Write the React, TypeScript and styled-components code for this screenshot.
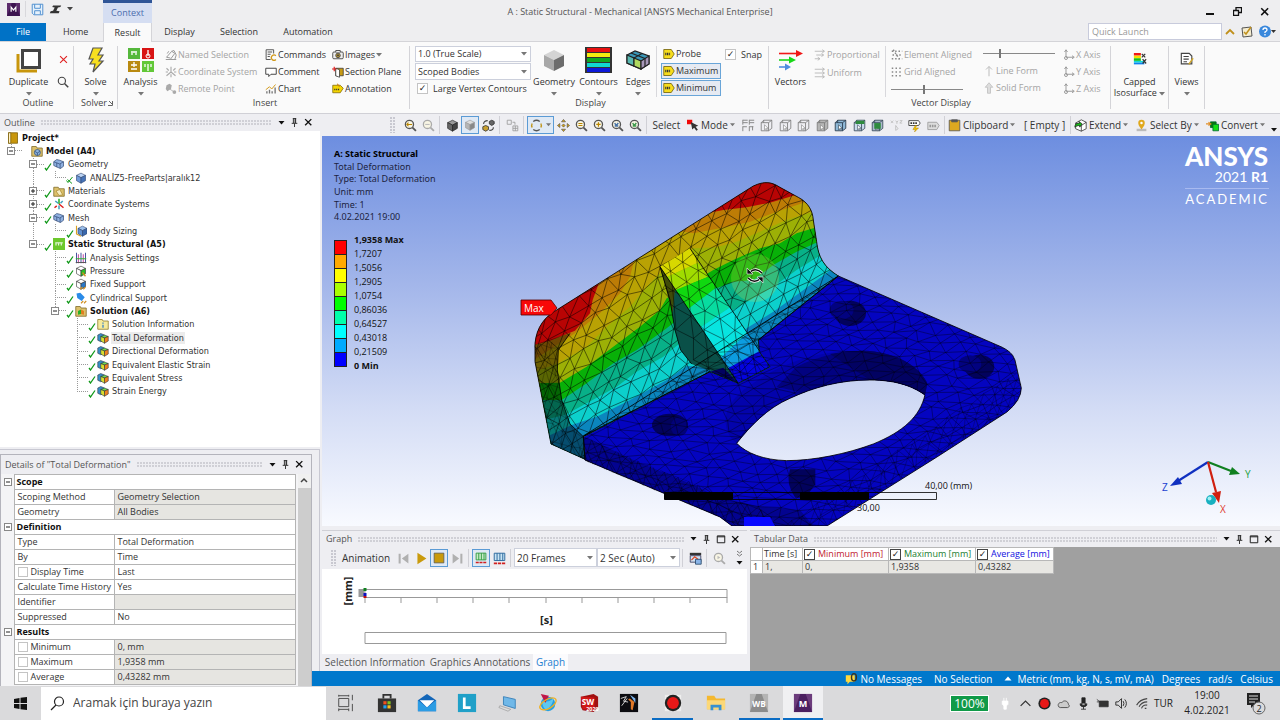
import React from "react";
import styled, { createGlobalStyle, css } from "styled-components";

const GlobalStyle = createGlobalStyle`
  * { box-sizing: border-box; }
  html, body, #root { height: 100%; }
  body {
    margin: 0;
    background: #eeeef2;
    color: #333;
    font: 9px/12px "Open Sans", "Noto Sans", sans-serif;
  }
  button, input, select { font: inherit; color: inherit; margin: 0; }
  ul { list-style: none; margin: 0; padding: 0; }
`;

/* ---------- shared ---------- */

const Row = styled.div<{ $gap?: number; $pr?: number }>`
  display: flex;
  align-items: center;
  gap: ${(p) => p.$gap ?? 0}px;
  padding-right: ${(p) => p.$pr ?? 0}px;
`;

const Column = styled.div<{ $w?: number; $ml?: number; $gap?: number; $pt?: number }>`
  display: flex;
  flex-direction: column;
  flex-shrink: 0;
  gap: ${(p) => p.$gap ?? 0}px;
  width: ${(p) => (p.$w ? `${p.$w}px` : "auto")};
  margin-left: ${(p) => p.$ml ?? 0}px;
  padding-top: ${(p) => p.$pt ?? 0}px;
`;

const PlainButton = styled.button`
  display: inline-flex;
  align-items: center;
  justify-content: center;
  padding: 0;
  border: 0;
  background: none;
  white-space: nowrap;
  svg {
    flex-shrink: 0;
  }
`;

const Spacer = styled.div`
  flex: 1;
`;

const Tick = styled.input.attrs({ type: "checkbox" })<{ $size?: number; $dark?: boolean }>`
  appearance: none;
  flex-shrink: 0;
  width: ${(p) => p.$size ?? 11}px;
  height: ${(p) => p.$size ?? 11}px;
  border: 1px solid ${(p) => (p.$dark ? "#444" : "#c4c4c4")};
  background: #fff;
  display: inline-grid;
  place-content: center;
  &:checked::before {
    content: "✓";
    font: bold 9px/9px "DejaVu Sans", sans-serif;
    color: #222;
  }
`;

const Down = ({ c = "#777", s = 6 }: { c?: string; s?: number }) => (
  <svg width={s} height="4" viewBox="0 0 6 4" aria-hidden="true">
    <path d="M0 0h6L3 3.6z" fill={c} />
  </svg>
);

/* ---------- icons ---------- */

const cubeFaces = (a: string, b: string, c: string, line = "#333") => (
  <g stroke={line} strokeWidth=".8" strokeLinejoin="round">
    <path d="M8 1.5 14 4.5 8 7.5 2 4.5z" fill={a} />
    <path d="M2 4.5 8 7.5V15L2 11.5z" fill={b} />
    <path d="M14 4.5 8 7.5V15l6-3.5z" fill={c} />
  </g>
);

const wireCube = (face: string, line = "#777") => (
  <g fill="none" stroke={line} strokeWidth="1">
    <path d="M1.500 4.500h9v10h-9zM1.500 4.500l3-3h10v10l-4 3M10.500 4.500l4-3M4.500 1.500v3" fill={face} />
    <path d="M5.500 7l4.500 4.500H8l1 2.500-1 .4-1-2.400-1.500 1.300z" fill="#fff" strokeWidth=".7" />
  </g>
);

const glass = (line: string, inner: React.ReactNode) => (
  <g fill="none" stroke={line} strokeWidth="1.600">
    <circle cx="6.700" cy="6.700" r="5" fill="#f8f5e4" />
    <path d="M10.500 10.500l4.200 4.200" strokeWidth="2.200" />
    {inner}
  </g>
);

const glyphs: Record<string, React.ReactNode> = {
  save: (
    <g fill="none" stroke="#4f8fd0" strokeWidth="1.200">
      <path d="M1.500 1.500h13v13h-11l-2-2z" fill="#e6f1fb" />
      <path d="M4.500 1.500v5h7v-5M4.500 14v-4.500h7V14" />
    </g>
  ),
  beam: <path d="M5 3h10l-1 2-3 .6-2 3.900 4 .5-1 2.500H1l1-2.500 3-.5 2-3.900-3-.6z" fill="#333" />,
  cross: <path d="M3 3l10 10M13 3L3 13" stroke="#e02020" strokeWidth="1.600" />,
  search: (
    <g fill="none" stroke="#444" strokeWidth="1.500">
      <circle cx="6.500" cy="6.500" r="4.800" />
      <path d="M10 10l5 5" strokeWidth="2" />
    </g>
  ),
  named: (
    <g fill="none" stroke="#999" strokeWidth="1.300">
      <path d="M1 14h14M2 11l7-8 4 3-6 8M9 3l3-1 3 6-2 6M3 6l2-3" />
      <path d="M2 11l5 1" />
    </g>
  ),
  coord: (
    <g stroke="#aaa" strokeWidth="1.500">
      <path d="M8 8V1M8 8l6 5M8 8l-6 5M2 3l3 3M14 3l-3 3M8 11v4M1 8h3M12 8h3" />
    </g>
  ),
  remote: (
    <g fill="#aaa">
      <path d="M2 3l4-2 3 2-1 5-5 3-2-3z" />
      <circle cx="12.500" cy="12" r="2.500" />
      <path d="M6 8l5 3" stroke="#aaa" />
    </g>
  ),
  commands: (
    <g fill="none" stroke="#555" strokeWidth="1.300">
      <path d="M1.500 1h10v5M1.500 1v13h6M3.500 4h6M3.500 7h4M3.500 10h3" />
      <path d="M14.500 9a3.500 3.500 0 1 0 0 5" stroke="#d29a1c" strokeWidth="1.800" />
    </g>
  ),
  comment: <path d="M1 3h14v8H8l-3 3v-3H1z" fill="#fff" stroke="#444" strokeWidth="1.300" />,
  chart: (
    <g fill="none" strokeWidth="1.800">
      <path d="M2.500 14v-3M6 14V9M9.500 14v-3M13.500 14V6" stroke="#777" />
      <path d="M1 9l5-4 3 3 5-6" stroke="#d29a1c" strokeWidth="1.300" />
    </g>
  ),
  camera: (
    <g stroke="#444" strokeWidth="1.200">
      <rect x="1" y="4" width="14" height="9" rx="1.500" fill="#eee" />
      <path d="M5 4V2h6v2" fill="#eee" />
      <circle cx="8" cy="8.500" r="3" fill="#d0a62a" />
      <circle cx="8" cy="8.500" r="1" fill="#333" />
    </g>
  ),
  section: (
    <g>
      <path d="M5 3h10v10H5z" fill="#c79a14" stroke="#333" />
      <path d="M5 3l5 2v10l-5-2z" fill="#fff" stroke="#333" />
      <path d="M0 4h6M3 1v6" stroke="#e02020" strokeWidth="1.600" />
    </g>
  ),
  annotation: (
    <g>
      <path d="M1 3h10l4 4-4 6H1z" fill="#f4d500" stroke="#7d6400" />
      <path d="M3 8.500h7" stroke="#333" strokeWidth="2" strokeDasharray="1.500 1" />
      <path d="M7 1l3 4" stroke="#d08010" strokeWidth="1.500" />
    </g>
  ),
  probe: (
    <g>
      <path d="M1 2h10l4 6-4 6H1z" fill="#f7dd1c" stroke="#665500" />
      <path d="M3 8h7" stroke="#333" strokeWidth="3.500" strokeDasharray="1.500 .8" />
    </g>
  ),
  prop: (
    <g stroke="#aaa" fill="none">
      <path d="M1 3h12M11 1l3 2-3 2M3 8h9M10 6l3 2-3 2M1 13h6M5 11l3 2-3 2" />
    </g>
  ),
  uniform: (
    <g stroke="#aaa" fill="none">
      <path d="M1 3h12M11 1l3 2-3 2M1 8h12M11 6l3 2-3 2M1 13h12M11 11l3 2-3 2" />
    </g>
  ),
  elementAligned: (
    <g stroke="#888" strokeWidth="2" strokeDasharray="2 2.500">
      <path d="M1 3h14M2 8h13M1 13h14M3 1l9 14" />
    </g>
  ),
  gridAligned: (
    <g stroke="#888" strokeWidth="2" strokeDasharray="2 3">
      <path d="M1 3h14M1 8h14M1 13h14" />
    </g>
  ),
  lineForm: <path d="M8 15V2M4 6l4-4 4 4" stroke="#bbb" fill="none" strokeWidth="1.300" />,
  solidForm: <path d="M6 15V7H3l5-6 5 6h-3v8z" fill="#ddd" stroke="#bbb" />,
  axis: (
    <g stroke="#999" fill="none" strokeWidth="1.300">
      <path d="M4 2v9h10M2 4l2-3 2 3M12 9l3 2-3 2" />
      <circle cx="4" cy="12" r="2" />
    </g>
  ),
  capped: (
    <g>
      <path d="M1 1h8v3H1z" fill="#f01818" />
      <path d="M1 4h8v3H1z" fill="#f6e000" />
      <path d="M1 7h8v3H1z" fill="#18c018" />
      <path d="M1 10h12v2H1z" fill="#10d8d8" />
      <path d="M1 12h12v2H1z" fill="#1080f0" />
      <path d="M10 2l4 4M14 2l-4 4M11 8l4 5M15 8l-4 5" stroke="#333" strokeWidth="1.400" />
    </g>
  ),
  views: (
    <g fill="#fff" stroke="#444" strokeWidth="1.300">
      <path d="M1.500 1.500h9l3 3v9h-12z" />
      <path d="M4 5h6M4 8h6M4 11h4" />
      <path d="M15 7l-5 7" stroke="#d0a62a" strokeWidth="1.600" />
    </g>
  ),
  zin: glass("#555", <path d="M3.500 6.700h6.400M5.500 4.500L3.500 6.700l2 2.200" stroke="#b98500" strokeWidth="1.300" />),
  zgray: glass("#aaa", <path d="M4 6.700h5.400" stroke="#bbb" strokeWidth="1.300" />),
  zminus: glass("#555", <path d="M4.200 5.500h5M4.200 8h5" stroke="#b98500" strokeWidth="1.300" />),
  zplus: glass("#555", <path d="M4 6.700h5.400M6.700 4v5.400" stroke="#b98500" strokeWidth="1.500" />),
  zfit: glass("#555", <path d="M4.500 5l2 3 2.500-3M4.500 8.500h4.500" stroke="#4a74a8" strokeWidth="1.800" />),
  zbox: glass("#555", <path d="M4.500 5l2 3 2.500-3M4.500 8.500h4.500" stroke="#3d9a4c" strokeWidth="1.800" />),
  cubeDark: cubeFaces("#999", "#666", "#444", "#222"),
  cubeGray: cubeFaces("#ddd", "#b5b5b5", "#888", "#999"),
  cubeSpin: (
    <g>
      <path d="M9 3l3-1.500 3 1.500v3l-3 2-3-2z" fill="#666" stroke="#333" />
      <path d="M1 9.500l3.500-1.500 3.500 1.500v3.500l-3.500 2-3.500-2z" fill="#c8a030" stroke="#333" />
      <path d="M2 6c0-3 2-4 5-4M14 10c0 3-2 4-5 4" stroke="#444" fill="none" strokeWidth="1.300" />
    </g>
  ),
  viewport: (
    <g fill="none" stroke="#999">
      <path d="M1.500 1.500h5v5h-5zM8.500 8.500h6v6h-6zM8.500 11.500h6M11.500 8.500v6M8 4h3v3" />
    </g>
  ),
  rotate: (
    <g fill="none" strokeWidth="1.700">
      <path d="M4 3a6.500 6 0 0 1 8 0M12 13a6.500 6 0 0 1-8 0" stroke="#555" />
      <path d="M2.600 5.500a6 6 0 0 0 0 5M13.400 5.500a6 6 0 0 1 0 5" stroke="#c0961c" />
    </g>
  ),
  pan: (
    <g fill="#d0a018" stroke="#444" strokeWidth=".7">
      <path d="M8 .5l2.500 3h-5zM8 15.500l2.500-3h-5zM.5 8l3-2.500v5zM15.500 8l-3-2.500v5z" />
      <path d="M8 6l2 2-2 2-2-2z" />
    </g>
  ),
  mode: (
    <g>
      <path d="M0 1h7v6H0z" fill="#f00808" />
      <path d="M5 4l10 5-3.500 1.200 3 4-2 1.500-3-4L7 14z" fill="#333" />
    </g>
  ),
  pick: (
    <g fill="none" stroke="#888" strokeWidth="1.200">
      <path d="M1 1.500h6M1 4.500h6M1 1v6M9 1.500h6M9 4.500h6M9 1v6M1 9.500h5M1 9v6M9 9.500h5M9 9v6M13 9v5" />
    </g>
  ),
  w1: wireCube("none"),
  w4: wireCube("#b5b5b5"),
  w5: wireCube("#8fb9d8", "#234"),
  w6: (
    <g>
      {wireCube("#cde", "#345")}
      <path d="M4 2h10v4H3z" fill="#2e8b3e" />
    </g>
  ),
  w7: (
    <g>
      {wireCube("#abc", "#345")}
      <path d="M4 5h8v7H4z" fill="#2e8b3e" />
    </g>
  ),
  xyz: (
    <g fill="none" stroke="#bbb">
      <path d="M1 2l3 3M4 2L1 5M7 2l1.500 2L10 2M8.500 4v2M12 2h3l-3 3h3M7 8v6l3-2z" />
    </g>
  ),
  tag: (
    <g>
      <path d="M1 2h12l2 3-2 3H1z" fill="#fff" stroke="#333" />
      <path d="M3 5h8" stroke="#333" strokeWidth="2" strokeDasharray="2 1" />
      <path d="M9 8l-3 5h3l-1 3 5-5H9l2-3z" fill="#f4c400" stroke="#a07800" strokeWidth=".5" />
    </g>
  ),
  abc: (
    <g>
      <path d="M1 4h11l3 4-3 5H1z" fill="#ddd" stroke="#999" />
      <path d="M3 8.500h8" stroke="#999" strokeWidth="3" strokeDasharray="2 1" />
    </g>
  ),
  clip: (
    <g stroke="#555">
      <path d="M1.500 1.500h13v13h-13z" fill="#dda920" />
      <path d="M4.500 1h7v2.500h-7z" fill="#555" />
    </g>
  ),
  extend: (
    <g stroke="#222" strokeWidth=".9">
      <path d="M9 1l6 3v8l-6 3-7-3V5z" fill="#fff" />
      <path d="M2 5l7 3v7M15 4L9 8" fill="none" />
      <path d="M1 10c0-4 3-5 6-5l-1-2 4 3-3 4V8c-3 0-4 1-6 2z" fill="#16c016" />
    </g>
  ),
  selectBy: (
    <g>
      <path d="M2 12h12v3H2z" fill="#bbb" />
      <path d="M8 13C5 9 4 7 4 5a4 4 0 0 1 8 0c0 2-1 4-4 8z" fill="#e0a81c" />
      <circle cx="8" cy="5" r="1.500" fill="#fff" />
    </g>
  ),
  convert: (
    <g>
      <path d="M5.500 3.500h7v7h-7z" fill="#0b7a0b" stroke="#063" />
      <path d="M8.500 6.500h7v8h-7z" fill="#16e016" stroke="#063" />
      <path d="M0 6h5M3 4l3 2-3 2" stroke="#e0902c" fill="none" strokeWidth="1.300" />
    </g>
  ),
  pin: <path d="M5 1h6M6 1v8M10 1v8M3 9.500h10M8 10v6M9 1v8" stroke="#222" strokeWidth="1.600" fill="none" />,
  close: <path d="M2 2l11 11M13 2L2 13" stroke="#111" strokeWidth="2.400" />,
  max: <path d="M2 3h12v11H2zM2 4.500h12" stroke="#222" strokeWidth="1.600" fill="none" />,
  check: <path d="M2 10l3 4L14 1" stroke="#109818" strokeWidth="2.600" fill="none" />,
  checkx: <path d="M1 9l3 4L13 2M3 7l9 8" stroke="#109818" strokeWidth="2" fill="none" />,
  project: (
    <g>
      <path d="M2 1h12v14H2z" fill="#c8960c" stroke="#7a5c06" />
      <path d="M2 1h3v14H2z" fill="#fff3c8" stroke="#7a5c06" />
    </g>
  ),
  folderCube: (
    <g>
      <path d="M1 2h6l1 2h7v11H1z" fill="#dcc06a" stroke="#7a6420" />
      <circle cx="8.500" cy="10" r="4" fill="#8fb4dc" stroke="#2d4c7a" />
      <path d="M5 8.500l3.500 2 3.500-2M8.500 10.500V14" stroke="#2d4c7a" fill="none" />
    </g>
  ),
  blueCubes: (
    <g stroke="#2d4470" strokeWidth=".9">
      <path d="M1 5l4-3 4 1 5 2v6l-4 3-5-2-4-2z" fill="#8fb0e0" />
      <path d="M1 5l4 1.500 4 1.500 5-3M5 6.500V12M9.500 8v6" fill="none" />
    </g>
  ),
  blueCube: cubeFaces("#bcd4f4", "#6f9ad8", "#4774b8", "#2d4470"),
  materials: (
    <g>
      <path d="M1 3h6l1 2h7v10H1z" fill="#dcc06a" stroke="#7a6420" />
      <path d="M4 8l5-2 4 7-5 1z" fill="#f6ecc0" stroke="#a88930" />
    </g>
  ),
  coordColor: (
    <g strokeWidth="2">
      <path d="M8 8V1" stroke="#20b020" />
      <path d="M8 8l6 5M2 13l3-2.500" stroke="#e02020" />
      <path d="M3 4l4 3M13 4l-3 3M8 10v5" stroke="#40a0c0" />
    </g>
  ),
  bodySizing: (
    <g>
      <g transform="translate(2 0)">{cubeFaces("#9cc0ec", "#5f8fd0", "#3a68ac", "#2d4470")}</g>
      <path d="M2 1v11l6 3" stroke="#d8a020" fill="none" strokeWidth="1.500" />
    </g>
  ),
  staticS: (
    <g>
      <path d="M0 0h16v16H0z" fill="#6cc82c" />
      <path d="M3 6.500h10M4 7v3M7.500 7v3M11 7v3" stroke="#fff" strokeWidth="1.300" />
    </g>
  ),
  settings: (
    <g strokeWidth="1.300" fill="none">
      <path d="M2 1v14M14 1v14M8 1v14" stroke="#40509a" />
      <path d="M4.500 3v12M11 3v12" stroke="#c040a0" />
      <path d="M1 9h14" stroke="#30b030" />
      <path d="M1 14h14" stroke="#555" />
    </g>
  ),
  pressure: (
    <g>
      {cubeFaces("#fff", "#fff", "#28c028", "#333")}
      <path d="M10 10l4 5" stroke="#d09020" strokeWidth="1.800" />
    </g>
  ),
  fixed: (
    <g>
      {cubeFaces("#fff", "#fff", "#2878c8", "#333")}
      <path d="M7 15l3-3M11 15l3-3" stroke="#d09020" strokeWidth="1.500" />
    </g>
  ),
  cylinder: (
    <g>
      <path d="M2 2l5-1 6 6-4 5-6-4z" fill="#2a8be8" />
      <path d="M8 15l3-3M12 15l3-3" stroke="#d09020" strokeWidth="1.500" />
    </g>
  ),
  solution: (
    <g>
      <path d="M1 2h6l1 2h7v11H1z" fill="#dcc06a" stroke="#7a6420" />
      <path d="M4 8l4-2v6l-4 1z" fill="#28b028" />
      <path d="M8 6l4 2v5l-4-1z" fill="#e08020" />
    </g>
  ),
  info: (
    <g>
      <path d="M1 2h6l1 2h7v11H1z" fill="#f6ea9c" stroke="#8a7420" />
      <path d="M8 6v1.500M8 9v4" stroke="#2878c8" strokeWidth="1.600" />
    </g>
  ),
  result: (
    <g stroke="#223" strokeWidth=".7">
      <path d="M1 4l4-2 5 2v7l-5 2-4-2z" fill="#3890c8" />
      <path d="M5 6l5-2 5 2-5 2z" fill="#70d850" />
      <path d="M10 8l5-2v6l-5 3z" fill="#f08020" />
      <path d="M5 6l5 2v7l-5-3z" fill="#d8e030" />
    </g>
  ),
  toStart: (
    <g fill="#b0b0b0">
      <path d="M2 2h2.500v12H2zM14 2v12L6 8z" />
    </g>
  ),
  toEnd: (
    <g fill="#b0b0b0">
      <path d="M11.500 2H14v12h-2.500zM2 2v12l8-6z" />
    </g>
  ),
  play: <path d="M3 1v14l11-7z" fill="#c99a0c" />,
  stop: <path d="M1.500 1.500h13v13h-13z" fill="#c99a0c" stroke="#555" />,
  frames: (
    <g fill="none" strokeWidth="1.200">
      <path d="M1.500 1.500h13v9h-13zM5 1.500v9M8.500 1.500v9M12 1.500v9" stroke="#2e9a3e" fill="#c8ecc8" />
      <path d="M1 14h14" stroke="#d02020" strokeWidth="2" strokeDasharray="4 1" />
    </g>
  ),
  frames2: (
    <g fill="none" strokeWidth="1.200">
      <path d="M1.500 1.500h13v9h-13zM5 1.500v9M8.500 1.500v9M12 1.500v9" stroke="#2e6a9e" fill="#c8e4f4" />
      <path d="M1 14h14" stroke="#d02020" strokeWidth="2" strokeDasharray="4 1" />
    </g>
  ),
  exportVideo: (
    <g>
      <path d="M1 1h14v3H1z" fill="#333" />
      <path d="M1.500 4.500h13v8h-13z" fill="#cfe2f4" stroke="#335" />
      <path d="M3 10l4-4 4 3" stroke="#e04820" fill="none" strokeWidth="1.500" />
      <path d="M8 9h7v6H8z" fill="#8ab4e8" stroke="#246" />
    </g>
  ),
  zplay: glass("#aaa", <path d="M5.500 4.500v4.500l3.500-2.200z" fill="#bbb" stroke="none" />),
  message: (
    <g>
      <path d="M1 4h11v8H6l-3 3v-3H1z" fill="#ffd83c" />
      <ellipse cx="11" cy="6.500" rx="3" ry="4.500" fill="none" stroke="#3b3420" strokeWidth="1.800" />
    </g>
  ),
  up: <path d="M8 3l7 8H1z" fill="#fff" />,
};

const Art = styled.svg`
  flex-shrink: 0;
`;

const Icon = ({ name, size = 14 }: { name: string; size?: number }) => (
  <Art width={size} height={size} viewBox="0 0 16 16" aria-hidden="true">
    {glyphs[name]}
  </Art>
);

/* ---------- title bar and tabs ---------- */

const Shell = styled.div`
  display: flex;
  flex-direction: column;
  height: 100vh;
  min-height: 640px;
  overflow: hidden;
`;

const TitleBar = styled.header`
  display: flex;
  height: 23px;
  flex-shrink: 0;
  background: #eeeef0;
`;

const QuickAccess = styled.div`
  display: flex;
  align-items: center;
  gap: 5px;
  width: 103px;
  padding: 0 0 5px 7px;
`;

const ContextTab = styled.div`
  width: 49px;
  border-top: 3px solid #2f5597;
  background: #d5def2;
  color: #4a6cae;
  line-height: 19px;
  text-align: center;
`;

const Title = styled.h1`
  flex: 1;
  margin: 0;
  padding-right: 64px;
  font-size: 9px;
  font-weight: 400;
  line-height: 24px;
  text-align: center;
  color: #555;
`;

const WindowButtons = styled.div`
  display: flex;
  width: 88px;
  align-items: center;
  justify-content: space-between;
  padding: 0 10px 0 14px;
`;

const TabBar = styled.nav`
  display: flex;
  align-items: stretch;
  height: 19px;
  flex-shrink: 0;
  background: #eeeef0;
  border-bottom: 1px solid #d4d4d8;
`;

const RibbonTab = styled(PlainButton)<{ $w: number; $kind?: "file" | "on" }>`
  width: ${(p) => p.$w}px;
  color: #333;
  ${(p) =>
    p.$kind === "file" &&
    css`
      background: #0072c6;
      color: #fff;
    `}
  ${(p) =>
    p.$kind === "on" &&
    css`
      background: #fafafa;
      border: 1px solid #d4d4d8;
      border-width: 0 1px;
      margin-bottom: -1px;
    `}
`;

const QuickLaunch = styled.input`
  width: 134px;
  height: 17px;
  padding: 0 3px;
  border: 1px solid #c8cbdc;
  background: #fff;
  &::placeholder {
    color: #999;
    opacity: 1;
  }
`;

/* ---------- ribbon ---------- */

const Ribbon = styled.section`
  display: flex;
  height: 72px;
  flex-shrink: 0;
  background: #fafafa;
  border-bottom: 1px solid #d0d0d6;
`;

const Group = styled.div<{ $w: number }>`
  display: flex;
  flex-direction: column;
  flex-shrink: 0;
  width: ${(p) => p.$w}px;
  margin: 4px 0;
  border-right: 1px solid #d4d4d8;
`;

const GroupBody = styled.div`
  display: flex;
  height: 51px;
  flex-shrink: 0;
`;

const GroupLabel = styled.div`
  padding-left: 3px;
  text-align: center;
  line-height: 12px;
  color: #444;
`;

const BigButton = styled(PlainButton)<{ $w: number }>`
  flex-direction: column;
  justify-content: flex-start;
  flex-shrink: 0;
  width: ${(p) => p.$w}px;
  padding-top: 1px;
  line-height: 11px;
  > svg:first-child {
    margin-bottom: 3px;
  }
  > span + svg {
    margin-top: 5px;
  }
`;

const SmallButton = styled(PlainButton)<{ $off?: boolean; $on?: boolean }>`
  justify-content: flex-start;
  height: ${(p) => (p.$on ? 17 : 18)}px;
  padding-left: ${(p) => (p.$on ? 1 : 2)}px;
  gap: 1px;
  color: ${(p) => (p.$off ? "#a4a4a4" : "#333")};
  ${(p) =>
    p.$on &&
    css`
      border: 1px solid #69a5d8;
      background: #e6eaf2;
      width: 60px;
      margin-bottom: 1px;
    `}
`;

const ThinRule = styled.div<{ $h?: number }>`
  width: 1px;
  height: ${(p) => (p.$h ? `${p.$h}px` : "auto")};
  background: #d8d8dc;
`;

const SelectBox = styled.div<{ $w: number; $h?: number }>`
  display: flex;
  align-items: center;
  width: ${(p) => p.$w}px;
  height: ${(p) => p.$h ?? 17}px;
  margin-bottom: 1px;
  padding-right: 3px;
  border: 1px solid #ccd0dc;
  background: #fff;
  select {
    appearance: none;
    flex: 1;
    min-width: 0;
    border: 0;
    padding: 0 2px;
    background: none;
    outline: none;
  }
`;

const CheckLabel = styled.label`
  display: flex;
  align-items: center;
  gap: 5px;
  height: 17px;
  padding-left: 2px;
  white-space: nowrap;
`;

const Slider = styled.input.attrs({ type: "range" })`
  appearance: none;
  width: 72px;
  height: 16px;
  margin: 0 2px;
  background: linear-gradient(#888, #888) center / 100% 1px no-repeat;
  &::-webkit-slider-thumb {
    appearance: none;
    width: 2px;
    height: 9px;
    background: #777;
  }
`;

const DuplicateIcon = () => (
  <svg width="26" height="26" viewBox="0 0 26 26" aria-hidden="true">
    <path d="M2 7v17h19" fill="none" stroke="#c8960c" strokeWidth="3" />
    <path d="M6.500 3.500h17v17h-17z" fill="#fff" stroke="#444" strokeWidth="3" />
  </svg>
);

const BoltIcon = () => (
  <svg width="26" height="26" viewBox="0 0 26 26" aria-hidden="true">
    <path d="M10 1h9l-4 7h5l-4 6h4L10 25l2-8H7l3-5H6z" fill="#f8e020" stroke="#555" strokeWidth="1.200" />
  </svg>
);

const AnalysisIcon = () => (
  <svg width="26" height="26" viewBox="0 0 26 26" aria-hidden="true">
    <path d="M0 1h12v11H0z" fill="#55b83c" />
    <path d="M14 1h12v11H14z" fill="#d81414" />
    <path d="M0 14h12v11H0z" fill="#b98a10" />
    <path d="M14 14h12v11H14z" fill="#62c838" />
    <path d="M3 5h6M4 6v2M8 6v2M20 3v6M3 18h6M6 15v5M3 22h6M20 17v7M17 17v3M23 17v3" stroke="#fff" strokeWidth="1.300" fill="none" />
    <circle cx="20" cy="9" r="2" fill="none" stroke="#fff" />
  </svg>
);

const GeometryIcon = () => (
  <svg width="26" height="26" viewBox="0 0 26 26" aria-hidden="true">
    <path d="M13 3l10 5-10 5L3 8z" fill="#d4d4d4" />
    <path d="M3 8l10 5v11L3 19z" fill="#a8a8a8" />
    <path d="M23 8l-10 5v11l10-5z" fill="#6c6c6c" />
  </svg>
);

const ContoursIcon = () => (
  <svg width="27" height="26" viewBox="0 0 27 26" aria-hidden="true">
    <path d="M0 0h27v26H0z" fill="#333" />
    <path d="M2 1h23v4H2z" fill="#e81010" />
    <path d="M2 6h23v4H2z" fill="#f4ec10" />
    <path d="M2 11h23v4H2z" fill="#10a820" />
    <path d="M2 16h23v4H2z" fill="#10d8d0" />
    <path d="M2 21h23v4H2z" fill="#0c18d8" />
  </svg>
);

const EdgesIcon = () => (
  <svg width="26" height="26" viewBox="0 0 26 26" aria-hidden="true" stroke="#222" strokeWidth="1.200">
    <path d="M2 8l8-4 14 5v8l-8 5-14-6z" fill="#3a98b8" />
    <path d="M2 8l7 3v8l-7-3z" fill="#58b8b0" />
    <path d="M9 11l7 3v8l-7-3z" fill="#b0d860" />
    <path d="M16 14l8-5v8l-8 5z" fill="#a898b8" />
    <path d="M9 11l8-4.500M6 6l14 5.500M20 11.500v8" fill="none" />
  </svg>
);

const VectorsIcon = () => (
  <svg width="26" height="26" viewBox="0 0 26 26" aria-hidden="true">
    <path d="M1 6.500h18" stroke="#f01818" strokeWidth="1.600" />
    <path d="M18 3l7 3.500-7 3.500z" fill="#f01818" />
    <path d="M1 13h12" stroke="#18d818" strokeWidth="1.600" />
    <path d="M11 9.500l7 3.500-7 3.500z" fill="#18d818" />
    <path d="M1 20h7" stroke="#4f8ee0" strokeWidth="1.600" />
    <path d="M7 16.500l6 3.500-6 3.500z" fill="#4f8ee0" />
  </svg>
);

const small = (icon: string, text: string, off = false, on = false) => (
  <SmallButton key={text} type="button" $off={off} $on={on} disabled={off}>
    <Icon name={icon} size={12} />
    {text}
  </SmallButton>
);

const RibbonBar = () => (
  <Ribbon>
    <Group $w={74}>
      <GroupBody>
        <BigButton type="button" $w={57}>
          <DuplicateIcon />
          <span>Duplicate</span>
          <Down />
        </BigButton>
        <Column $gap={11} $pt={8}>
          <PlainButton type="button" aria-label="Delete">
            <Icon name="cross" size={11} />
          </PlainButton>
          <PlainButton type="button" aria-label="Find">
            <Icon name="search" size={12} />
          </PlainButton>
        </Column>
      </GroupBody>
      <GroupLabel>Outline</GroupLabel>
    </Group>
    <Group $w={44}>
      <GroupBody>
        <BigButton type="button" $w={43}>
          <BoltIcon />
          <span>Solve</span>
          <Down />
        </BigButton>
      </GroupBody>
      <GroupLabel>
        Solver
        <svg width="6" height="6" viewBox="0 0 6 6" aria-hidden="true">
          <path d="M1 5.500h4.500V1M2 1l3 3" stroke="#666" fill="none" />
        </svg>
      </GroupLabel>
    </Group>
    <Group $w={292}>
      <GroupBody>
        <BigButton type="button" $w={45}>
          <AnalysisIcon />
          <span>Analysis</span>
          <Down />
        </BigButton>
        <Column $w={100}>
          {small("named", "Named Selection", true)}
          {small("coord", "Coordinate System", true)}
          {small("remote", "Remote Point", true)}
        </Column>
        <Column $w={67}>
          {small("commands", "Commands")}
          {small("comment", "Comment")}
          {small("chart", "Chart")}
        </Column>
        <Column>
          <SmallButton type="button">
            <Icon name="camera" size={12} />
            Images
            <Down />
          </SmallButton>
          {small("section", "Section Plane")}
          {small("annotation", "Annotation")}
        </Column>
      </GroupBody>
      <GroupLabel>Insert</GroupLabel>
    </Group>
    <Group $w={359}>
      <GroupBody>
        <Column $w={116} $ml={5}>
          <SelectBox $w={116}>
            <select aria-label="Deformation scale">
              <option>1.0 (True Scale)</option>
            </select>
            <Down />
          </SelectBox>
          <SelectBox $w={116}>
            <select aria-label="Bodies shown">
              <option>Scoped Bodies</option>
            </select>
            <Down />
          </SelectBox>
          <CheckLabel>
            <Tick defaultChecked />
            Large Vertex Contours
          </CheckLabel>
        </Column>
        <BigButton type="button" $w={46}>
          <GeometryIcon />
          <span>Geometry</span>
          <Down />
        </BigButton>
        <BigButton type="button" $w={43}>
          <ContoursIcon />
          <span>Contours</span>
          <Down />
        </BigButton>
        <BigButton type="button" $w={36}>
          <EdgesIcon />
          <span>Edges</span>
          <Down />
        </BigButton>
        <ThinRule />
        <Column $w={60} $ml={4}>
          {small("probe", "Probe")}
          {small("probe", "Maximum", false, true)}
          {small("probe", "Minimum", false, true)}
        </Column>
        <Column $ml={2}>
          <CheckLabel>
            <Tick defaultChecked />
            Snap
          </CheckLabel>
        </Column>
      </GroupBody>
      <GroupLabel>Display</GroupLabel>
    </Group>
    <Group $w={342}>
      <GroupBody>
        <BigButton type="button" $w={43}>
          <VectorsIcon />
          <span>Vectors</span>
        </BigButton>
        <Column $w={73}>
          {small("prop", "Proportional", true)}
          {small("uniform", "Uniform", true)}
        </Column>
        <ThinRule />
        <Column $w={92} $ml={3}>
          {small("elementAligned", "Element Aligned", true)}
          {small("gridAligned", "Grid Aligned", true)}
          <Slider aria-label="Vector density" defaultValue={46} disabled />
        </Column>
        <Column $w={80}>
          <Slider aria-label="Vector length" defaultValue={23} disabled />
          {small("lineForm", "Line Form", true)}
          {small("solidForm", "Solid Form", true)}
        </Column>
        <Column $w={42}>
          {small("axis", "X Axis", true)}
          {small("axis", "Y Axis", true)}
          {small("axis", "Z Axis", true)}
        </Column>
      </GroupBody>
      <GroupLabel>Vector Display</GroupLabel>
    </Group>
    <Group $w={58}>
      <GroupBody>
        <BigButton type="button" $w={57}>
          <svg width="14" height="26" viewBox="0 -4 16 26" aria-hidden="true">
            {glyphs.capped}
          </svg>
          <span>
            Capped
            <br />
            Isosurface <Down />
          </span>
        </BigButton>
      </GroupBody>
    </Group>
    <Group $w={36}>
      <GroupBody>
        <BigButton type="button" $w={35}>
          <svg width="14" height="26" viewBox="0 -4 16 26" aria-hidden="true">
            {glyphs.views}
          </svg>
          <span>Views</span>
          <Down />
        </BigButton>
      </GroupBody>
    </Group>
  </Ribbon>
);

/* ---------- panels ---------- */

const Work = styled.main`
  position: relative;
  display: flex;
  flex: 1;
  min-height: 0;
`;

const Sidebar = styled.aside`
  display: flex;
  flex-direction: column;
  width: 320px;
  flex-shrink: 0;
  margin-right: 2px;
  background: #eeeef2;
`;

const PanelHead = styled.div<{ $h?: number }>`
  display: flex;
  align-items: center;
  gap: 6px;
  height: ${(p) => p.$h ?? 17}px;
  flex-shrink: 0;
  padding: 0 7px 0 4px;
  color: #555;
  background: #eeeef2;
  h2 {
    margin: 0;
    font-size: 9px;
    font-weight: 400;
    white-space: nowrap;
  }
`;

const Dots = styled.div`
  flex: 1;
  height: 5px;
  background: radial-gradient(circle at 1px 1px, #d0d0d6 35%, transparent 50%) 0 0 / 3px 3px;
`;

const HeadButtons = ({ max = false }: { max?: boolean }) => (
  <Row $gap={5}>
    <PlainButton type="button" aria-label="Options">
      <Down c="#111" s={7} />
    </PlainButton>
    <PlainButton type="button" aria-label="Pin">
      <Icon name="pin" size={9} />
    </PlainButton>
    {max && (
      <PlainButton type="button" aria-label="Maximize">
        <Icon name="max" size={10} />
      </PlainButton>
    )}
    <PlainButton type="button" aria-label="Close">
      <Icon name="close" size={9} />
    </PlainButton>
  </Row>
);

const TreeBox = styled.div`
  flex: 1;
  min-height: 0;
  overflow: hidden;
  background: #fff;
`;

const DockGap = styled.div`
  height: 222px;
  flex-shrink: 0;
  margin-top: 2px;
  border: 1px solid #c8c8d2;
  border-width: 1px 1px 0 0;
`;

const Tree = styled.ul`
  display: flex;
  flex-direction: column;
  height: 267px;
  font-family: "DejaVu Sans Condensed", "DejaVu Sans", sans-serif;
  font-size: 9px;
  color: #333;
`;

const Node = styled.li`
  display: flex;
  flex: 1;
  min-height: 0;
  align-items: center;
`;

const dotsV = "repeating-linear-gradient(#999 0 1px, transparent 1px 2px)";
const dotsH = "repeating-linear-gradient(90deg, #999 0 1px, transparent 1px 2px)";

const Guide = styled.span<{ $g: string }>`
  display: grid;
  place-content: center;
  align-self: stretch;
  width: 22px;
  flex-shrink: 0;
  ${(p) => p.$g === "|" && `background-image: ${dotsV}; background-size: 1px 100%; background-position: 11px 0;`}
  ${(p) =>
    "t+-".includes(p.$g) &&
    `background-image: ${dotsV}, ${dotsH}; background-size: 1px 100%, 11px 1px; background-position: 11px 0, 11px 6px;`}
  ${(p) =>
    "l_".includes(p.$g) &&
    `background-image: ${dotsV}, ${dotsH}; background-size: 1px 50%, 11px 1px; background-position: 11px 0, 11px 6px;`}
  background-repeat: no-repeat;
`;

const Toggle = styled.button`
  display: grid;
  place-content: center;
  width: 8px;
  height: 8px;
  padding: 0;
  border: 1px solid #888;
  background: #fff;
`;

const Mark = ({ plus = false }: { plus?: boolean }) => (
  <svg width="6" height="6" viewBox="0 0 6 6" aria-hidden="true">
    <path d={plus ? "M1 3h4M3 1v4" : "M1 3h4"} stroke="#222" />
  </svg>
);

const Check = styled.span<{ $w?: number }>`
  display: flex;
  width: ${(p) => p.$w ?? 9}px;
  padding-top: 5px;
  flex-shrink: 0;
`;

const NodeLabel = styled.span<{ $bold?: boolean; $sel?: boolean }>`
  margin-left: 2px;
  padding: 0 1px;
  line-height: 12px;
  white-space: nowrap;
  font-weight: ${(p) => (p.$bold ? 700 : 400)};
  color: ${(p) => (p.$bold ? "#111" : "#333")};
  background: ${(p) => (p.$sel ? "#ececec" : "none")};
`;

/* guide codes, one per indent level: "|" line, "t" tee, "l" last, "+"/"-" toggle, "_" last toggle, "." empty */
const nodes: [string, string, string, string?][] = [
  ["", "project", "Project*", "b"],
  ["_", "folderCube", "Model (A4)", "b"],
  [".-", "blueCubes", "Geometry", "c"],
  [".|l", "blueCube", "ANALİZ5-FreeParts|aralık12", "x"],
  [".+", "materials", "Materials", "c"],
  [".+", "coordColor", "Coordinate Systems", "c"],
  [".-", "blueCubes", "Mesh", "c"],
  [".|l", "bodySizing", "Body Sizing", "c"],
  ["._", "staticS", "Static Structural (A5)", "cb"],
  ["..t", "settings", "Analysis Settings", "c"],
  ["..t", "pressure", "Pressure", "c"],
  ["..t", "fixed", "Fixed Support", "c"],
  ["..t", "cylinder", "Cylindrical Support", "c"],
  [".._", "solution", "Solution (A6)", "cb"],
  ["...t", "info", "Solution Information", "c"],
  ["...t", "result", "Total Deformation", "cs"],
  ["...t", "result", "Directional Deformation", "c"],
  ["...t", "result", "Equivalent Elastic Strain", "c"],
  ["...t", "result", "Equivalent Stress", "c"],
  ["...l", "result", "Strain Energy", "c"],
];

const OutlineTree = () => (
  <TreeBox>
    <Tree>
      {nodes.map(([guides, icon, label, flags = ""]) => (
        <Node key={label}>
          {guides.split("").map((g, i) => (
            <Guide key={i} $g={g}>
              {"+-_".includes(g) && (
                <Toggle type="button" aria-label={`Toggle ${label}`}>
                  <Mark plus={g === "+"} />
                </Toggle>
              )}
            </Guide>
          ))}
          <Check $w={guides ? 9 : 7}>
            {flags.includes("c") && <Icon name="check" size={8} />}
            {flags.includes("x") && <Icon name="checkx" size={8} />}
          </Check>
          <Icon name={icon} size={12} />
          <NodeLabel $bold={flags.includes("b")} $sel={flags.includes("s")}>
            {label}
          </NodeLabel>
        </Node>
      ))}
    </Tree>
  </TreeBox>
);

const DetailsWindow = styled.section`
  position: absolute;
  left: 0;
  bottom: -15px;
  z-index: 2;
  display: flex;
  flex-direction: column;
  width: 312px;
  height: 232px;
  overflow: hidden;
  border: 1px solid #b4b4bc;
  border-bottom: 0;
  background: #f4f4f6;
`;

const DetailsBody = styled.div`
  display: flex;
  gap: 2px;
  padding-left: 2px;
  flex: 1;
  min-height: 0;
`;

const DetailsTable = styled.table`
  width: 292px;
  align-self: flex-start;
  border-collapse: collapse;
  table-layout: fixed;
  color: #333;
  td, th {
    height: 15px;
    padding: 0 3px;
    border: 1px solid #b4b4b4;
    background: #fff;
    line-height: 12px;
    text-align: left;
    font-weight: 400;
    white-space: nowrap;
  }
  th[colspan] {
    padding-left: 2px;
    font-weight: 700;
    color: #111;
  }
  td.tog {
    padding: 0 1px;
    border: 0;
    background: #f4f4f6;
  }
  td.ro {
    background: #e6e5e1;
  }
  label {
    display: flex;
    align-items: center;
    gap: 3px;
  }
`;

const ScrollTrack = styled.div`
  width: 13px;
  background: linear-gradient(#f0f0f0 14px, #cdcdcd 14px);
  text-align: center;
`;

const details: [string, string?, string?][] = [
  ["Scope"],
  ["Scoping Method", "Geometry Selection", "r"],
  ["Geometry", "All Bodies", "r"],
  ["Definition"],
  ["Type", "Total Deformation", ""],
  ["By", "Time", ""],
  ["Display Time", "Last", "c"],
  ["Calculate Time History", "Yes", ""],
  ["Identifier", "", "r"],
  ["Suppressed", "No", ""],
  ["Results"],
  ["Minimum", "0, mm", "rc"],
  ["Maximum", "1,9358 mm", "rc"],
  ["Average", "0,43282 mm", "rc"],
];

const Details = () => (
  <DetailsWindow>
    <PanelHead $h={19}>
      <h2>Details of "Total Deformation"</h2>
      <Dots />
      <HeadButtons />
    </PanelHead>
    <DetailsBody>
      <DetailsTable>
        <colgroup>
          <col width="11" />
          <col width="100" />
          <col width="181" />
        </colgroup>
        <tbody>
          {details.map(([name, value, flags = ""]) =>
            value === undefined ? (
              <tr key={name}>
                <td className="tog">
                  <Toggle type="button" aria-label={`Toggle ${name}`}>
                    <Mark />
                  </Toggle>
                </td>
                <th colSpan={2}>{name}</th>
              </tr>
            ) : (
              <tr key={name}>
                <td className="tog" />
                <th scope="row">
                  {flags.includes("c") ? (
                    <label>
                      <Tick $size={10} />
                      {name}
                    </label>
                  ) : (
                    name
                  )}
                </th>
                <td className={flags.includes("r") ? "ro" : undefined}>{value}</td>
              </tr>
            )
          )}
        </tbody>
      </DetailsTable>
      <ScrollTrack>
        <svg width="8" height="6" viewBox="0 0 8 6" aria-hidden="true">
          <path d="M1 5l3-3 3 3" stroke="#444" fill="none" strokeWidth="1.500" />
        </svg>
      </ScrollTrack>
    </DetailsBody>
  </DetailsWindow>
);

/* ---------- graphics toolbar ---------- */

const Right = styled.div`
  display: flex;
  flex: 1;
  flex-direction: column;
  min-width: 0;
`;

const ToolStrip = styled.div`
  display: flex;
  align-items: center;
  height: 22px;
  flex-shrink: 0;
  padding-left: 68px;
  font-size: 10px;
  color: #333;
`;

const Grip = styled.div`
  width: 5px;
  height: 16px;
  margin-right: 6px;
  flex-shrink: 0;
  background: radial-gradient(circle at 1px 1px, #c8c8d0 35%, transparent 50%) 0 0 / 3px 3px;
`;

const Tool = styled(PlainButton)<{ $on?: boolean; $w?: number }>`
  width: ${(p) => p.$w ?? 18}px;
  height: 18px;
  flex-shrink: 0;
  gap: 3px;
  border: 1px solid ${(p) => (p.$on ? "#5b9bd5" : "transparent")};
  background: ${(p) => (p.$on ? "#dfe9f5" : "none")};
`;

const Rule = styled.div`
  width: 1px;
  height: 18px;
  margin: 0 3px 0 2px;
  flex-shrink: 0;
  background: #d0d0d6;
`;

const Batch = styled.div`
  display: flex;
  flex-shrink: 0;
  justify-content: space-between;
  width: 203px;
`;

const TextTool = styled(PlainButton)<{ $w: number }>`
  width: ${(p) => p.$w}px;
  flex-shrink: 0;
  justify-content: flex-start;
  gap: 2px;
`;

const MoreTools = styled(PlainButton)`
  align-self: flex-end;
  padding-bottom: 4px;
`;

const Tools = ({ names }: { names: string[] }) => (
  <>
    {names.map((n, i) => (
      <Tool key={n + i} type="button" aria-label={n}>
        <Icon name={n} size={13} />
      </Tool>
    ))}
  </>
);

const GraphicsToolbar = () => (
  <ToolStrip>
    <Grip />
    <Tools names={["zin", "zgray"]} />
    <Rule />
    <Tools names={["cubeDark"]} />
    <Tool type="button" $on aria-label="Shaded">
      <Icon name="cubeGray" size={12} />
    </Tool>
    <Tools names={["cubeSpin"]} />
    <Rule />
    <Tools names={["viewport"]} />
    <Rule />
    <Tool type="button" $on $w={27} aria-label="Rotate">
      <Icon name="rotate" size={13} />
      <Down s={5} />
    </Tool>
    <Tools names={["pan", "zminus", "zplus", "zfit", "zbox"]} />
    <Rule />
    <TextTool as="span" $w={37}>&nbsp;Select</TextTool>
    <TextTool type="button" $w={52}>
      <Icon name="mode" size={12} />
      Mode
      <Down s={5} />
    </TextTool>
    <Batch>
      <Tools names={["pick", "w1", "w1", "w1", "w4", "w5", "w6", "w7", "xyz", "tag", "abc"]} />
    </Batch>
    <Rule />
    <TextTool type="button" $w={76}>
      <Icon name="clip" size={13} />
      Clipboard
      <Down s={5} />
    </TextTool>
    <TextTool as="span" $w={44}>[ Empty ]</TextTool>
    <Rule />
    <TextTool type="button" $w={61}>
      <Icon name="extend" size={13} />
      Extend
      <Down s={5} />
    </TextTool>
    <TextTool type="button" $w={71}>
      <Icon name="selectBy" size={13} />
      Select By
      <Down s={5} />
    </TextTool>
    <TextTool type="button" $w={60}>
      <Icon name="convert" size={13} />
      Convert
      <Down s={5} />
    </TextTool>
    <Spacer />
    <MoreTools type="button" aria-label="More tools">
      <Down c="#111" />
    </MoreTools>
    <Row $pr={3} />
  </ToolStrip>
);

/* ---------- 3D viewport ---------- */

const Viewport = styled.section`
  position: relative;
  display: flex;
  flex: 1;
  min-height: 0;
  overflow: hidden;
  background: linear-gradient(#6d8ee0 0%, #a3b6ea 38%, #d3dcf5 70%, #f8faff 100%);
  > svg {
    width: 100%;
    height: 100%;
  }
`;

const Caption = styled.div`
  position: absolute;
  left: 12px;
  top: 11px;
  color: #1c2340;
  font-family: "Noto Sans", sans-serif;
  p {
    margin: 0;
    line-height: 12px;
  }
  p:first-child {
    line-height: 14px;
    font-weight: 700;
    color: #000;
  }
  p:nth-child(4) {
    line-height: 14px;
  }
`;

const Legend = styled.ul`
  position: absolute;
  left: 12px;
  top: 97px;
  display: flex;
  flex-direction: column;
  color: #111;
`;

const LegendItem = styled.li<{ $c?: string }>`
  display: flex;
  gap: 7px;
  height: 14px;
  line-height: 14px;
  &::before {
    content: "";
    box-sizing: border-box;
    width: 13px;
    height: 15px;
    margin-top: 7px;
    flex-shrink: 0;
    background: ${(p) => p.$c ?? "transparent"};
    border: ${(p) => (p.$c ? "1px solid #222" : 0)};
  }
`;

const legend: [string, string?][] = [
  ["1,9358 Max", "#ff0000"],
  ["1,7207", "#ffaa00"],
  ["1,5056", "#ffff00"],
  ["1,2905", "#aaff00"],
  ["1,0754", "#00ff00"],
  ["0,86036", "#00ffaa"],
  ["0,64527", "#00ffff"],
  ["0,43018", "#00aaff"],
  ["0,21509", "#0000ff"],
  ["0 Min"],
];

/* deterministic pseudo random offset in -0.5..0.5 */
const noise = (i: number, j: number, k: number) => {
  const s = Math.sin(i * 127.1 + j * 311.7 + k * 74.7) * 43758.5453;
  return s - Math.floor(s) - 0.5;
};

/* triangulated lattice spanned by two edge vectors, odd rows shifted by half a cell */
const mesh = (
  ox: number,
  oy: number,
  u: [number, number],
  v: [number, number],
  nu: number,
  nv: number,
  jitter: number
) => {
  const pt = (i: number, j: number) => {
    const a = i + (j % 2 ? 0.5 : 0) + noise(i, j, 1) * jitter;
    const b = j + noise(i, j, 2) * jitter;
    return `${(ox + u[0] * a + v[0] * b).toFixed(1)} ${(oy + u[1] * a + v[1] * b).toFixed(1)}`;
  };
  let d = "";
  for (let i = 0; i < nu; i++) {
    for (let j = 0; j < nv; j++) {
      d += `M${pt(i + 1, j)}L${pt(i, j)}L${pt(i, j + 1)}`;
      d += j % 2 ? `M${pt(i, j)}L${pt(i + 1, j + 1)}` : `M${pt(i + 1, j)}L${pt(i, j + 1)}`;
    }
  }
  return d;
};

const wallMesh = mesh(510, 320, [15, -8.5], [1, 14], 26, 16, 0.4);
const ribMesh = mesh(640, 268, [14, -9], [9, 15], 8, 10, 0.3);
const sideMesh = mesh(525, 310, [11, 4], [2, 14], 5, 12, 0.4);
const baseMesh = mesh(500, 430, [13, -7.5], [12, 5], 34, 44, 0.5);
const rimMesh = mesh(780, 530, [12, -8], [1, 13], 24, 4, 0.4);
const frontMesh = mesh(580, 436, [12, 5], [1, 12], 16, 3, 0.4);

const WALL =
  "M45 520C50 470 75 440 110 420L700 48C735 32 755 36 780 52L835 82C865 98 878 122 880 150L890 215C895 260 910 290 955 318L715 510L718 545L750 590L655 640L570 605L190 800L195 868L93 822L45 575Z";
const RIB = "M420 290L510 235L718 545L750 590L655 640L580 605L515 582L482 540L465 480L450 390Z";
const BASE =
  "M190 798L955 318L1431 525Q1465 538 1478 556L1485 570L1504 654Q1504 690 1461 726L1251 861L921 1068H636L600 1041L195 870Z";
const HOLE =
  "M650 820C690 770 740 715 810 685C880 652 960 630 1050 630C1130 630 1180 650 1215 675C1200 740 1150 785 1060 822C980 852 880 872 800 872C730 870 680 850 650 820Z";
const PLATE = "translate(520 170) scale(.3333)";

const Model = () => (
  <svg viewBox="322 136 958 390" preserveAspectRatio="xMidYMid meet" role="img" aria-label="Total deformation plot">
    <defs>
      <clipPath id="wall">
        <path d={WALL + RIB} clipRule="evenodd" transform={PLATE} />
      </clipPath>
      <clipPath id="wallLocal">
        <path d={WALL} />
      </clipPath>
      <clipPath id="base">
        <path d={BASE + HOLE} clipRule="evenodd" transform={PLATE} />
      </clipPath>
      <clipPath id="rib">
        <path d={RIB} transform={PLATE} />
      </clipPath>
      <clipPath id="side">
        <path d="M534 345L556 341 558 350 557 370 562 400 570 424 583 437 585 460 551 444 535 362Z" />
      </clipPath>
      <clipPath id="rim">
        <path d="M800 505L925 432 1012 368 1022 385 1018 402 1005 413 825 526 770 526Z" />
      </clipPath>
      <clipPath id="front">
        <path d="M583 436L640 462 735 500 800 508 800 526 740 526 585 461Z" />
      </clipPath>
    </defs>

    <g transform={PLATE}>
      <path d={BASE + HOLE} fillRule="evenodd" fill="#0404c0" />
      <path d="M190 798L340 870 520 945 600 985 720 1010 840 1020 880 1068H636L600 1041 195 870Z" fill="#030390" />
      <path
        d="M650 820C600 780 600 700 700 640C800 570 900 542 1030 542C1130 545 1200 590 1222 640L1215 675C1180 650 1130 630 1050 630C960 630 880 652 810 685C740 715 690 770 650 820Z"
        fill="#0303ac"
      />
      <path d="M770 650L830 590Q920 545 1030 542C1130 545 1200 590 1222 640L1215 675C1180 650 1130 630 1050 630Q930 632 850 668z" fill="#020280" />
      <path d="M930 552Q980 542 1030 542C1130 545 1200 590 1222 640L1215 675C1180 650 1130 630 1050 630z" fill="#020262" />
      <ellipse cx="990" cy="430" rx="48" ry="38" fill="#02025c" />
      <ellipse cx="965" cy="420" rx="36" ry="28" fill="#020280" />
      <ellipse cx="1378" cy="590" rx="45" ry="36" fill="#02025c" />
      <ellipse cx="1350" cy="582" rx="34" ry="26" fill="#020280" />
      <ellipse cx="450" cy="765" rx="54" ry="34" fill="#02025c" />
      <ellipse cx="478" cy="770" rx="26" ry="28" fill="#020278" />
      <path d="M810 898h76v45l-30 40h-30q-30-40-16-85z" fill="#02025c" />

      <g clipPath="url(#wallLocal)">
        <path d="M0 0h1000v900H0z" fill="#bd7c06" />
        <path
          d="M30 528L90 512 165 482 210 430 218 390 240 330 100 300 20 400zM560 130L610 120 680 112 750 98 830 74 780 0 600 0z"
          fill="#b80404"
        />
        <path d="M30 578L115 522 165 490 240 430 300 370 330 320 345 262 360 200 460 180 520 190 600 175 690 155 770 125 860 95 960 80V900H0z" fill="#b9a204" />
        <path d="M30 610L115 580 200 530 260 470 330 410 380 350 430 300 520 235 590 232 650 215 720 185 800 150 960 100V900H0z" fill="#9cb006" />
        <path d="M30 640L120 638 200 590 280 530 360 470 420 420 440 385 580 300 640 270 720 235 780 220 830 190 960 150V900H0z" fill="#08b008" />
        <path d="M30 690L125 690 200 640 280 580 350 540 440 475 590 355 640 335 700 330 760 285 830 245 960 185V900H0z" fill="#08b088" />
        <path d="M30 760L135 735 200 700 290 650 350 605 430 560 480 520 640 420 700 385 760 350 830 300 960 220V900H0z" fill="#0cd0cc" />
        <path d="M80 800L155 765 230 740 330 690 440 630 500 588 560 590 680 475 760 425 830 375 960 280V900H0z" fill="#0b86be" />
        <path d="M30 528L150 490 115 540 112 600 125 690 150 762 190 800 195 880 0 880z" fill="#000" opacity=".42" />
        <path d="M420 290L510 235 534 278 441 321z" fill="#d8d800" />
        <path d="M441 321L534 278 565 320 467 360z" fill="#a0dc00" />
        <path d="M467 360L565 320 590 352 505 416z" fill="#10d810" />
        <path d="M505 416L590 352 630 412 542 472z" fill="#08dca0" />
        <path d="M542 472L630 412 683 490 603 563z" fill="#08e4e0" />
        <path d="M603 563L683 490 718 544 624 595z" fill="#0c9ce0" />
        <path d="M624 595L718 544 750 590 655 640z" fill="#0404e0" />
        <path d="M420 290L655 640 580 605 515 582 482 540 465 480 450 390z" fill="#0a5048" />
        <path d="M420 290L465 357 458 430z" fill="#404c08" />
        <path d="M570 605l40-12 45 47z" fill="#020260" />
      </g>
    </g>

    <g fill="none" stroke="#000" strokeWidth=".6">
      <path d={wallMesh} clipPath="url(#wall)" strokeOpacity=".85" />
      <path d={baseMesh} clipPath="url(#base)" strokeOpacity=".6" />
      <path d={rimMesh} clipPath="url(#rim)" strokeOpacity=".4" />
      <path d={frontMesh} clipPath="url(#front)" strokeOpacity=".6" />
      <path d={ribMesh} clipPath="url(#rib)" strokeOpacity=".8" />
      <path d={sideMesh} clipPath="url(#side)" strokeOpacity=".4" />
      <g transform={PLATE} strokeWidth="2.500">
        <path d={WALL} />
        <path d={BASE} />
        <path d={HOLE} />
        <path d="M420 290L655 640M420 290L450 390 465 480 482 540 515 582M510 235L720 545M190 798L570 605M715 510L955 318M150 490L115 540 112 600 125 690 150 762 190 800" />
      </g>
    </g>
    <path d="M744 517h26l5 9h-31z" fill="#0808ff" />

    <circle cx="755" cy="278" r="24" fill="#d8e850" opacity=".22" />
    <g fill="none" stroke="#fff" strokeWidth="3">
      <path d="M750 272q6-5 12 1M760 279q-6 5-12-1" />
    </g>
    <g fill="none" stroke="#111" strokeWidth="1.600">
      <path d="M750 272q6-5 12 1M760 279q-6 5-12-1" />
      <path d="M747 268v6h6zM763 283v-6h-6z" fill="#111" stroke="#fff" strokeWidth=".6" />
    </g>

    <path d="M521 300h30l6 8-6 7h-30z" fill="#f80808" stroke="#500" strokeWidth=".8" />
    <text x="524" y="312" fill="#fff" fontSize="10">Max</text>

    <g stroke="#000">
      <path d="M664.500 492.500h68v7h-68zM800.500 492.500h68v7h-68z" fill="#000" />
      <path d="M732.500 492.500h68v7h-68zM868.500 492.500h68v7h-68z" fill="none" strokeWidth=".8" />
    </g>
    <g fontSize="9" fill="#111">
      <text x="925" y="489">40,00 (mm)</text>
      <text x="857" y="511">30,00</text>
    </g>

    <g strokeWidth="2.200">
      <path d="M1208 462L1178 481" stroke="#1030c0" />
      <path d="M1170 486l8-9 4 7z" fill="#1030c0" />
      <path d="M1208 462L1231 471" stroke="#108020" />
      <path d="M1240 474l-11 1 3-8z" fill="#108020" />
      <path d="M1208 462L1216 492" stroke="#d02010" />
      <path d="M1219 503l-7-10 9-2z" fill="#d02010" />
      <circle cx="1211" cy="500" r="5" fill="#18b0c0" />
      <circle cx="1209.500" cy="498.500" r="2" fill="#a0f0f4" />
    </g>
    <g fontSize="10">
      <text x="1162" y="491" fill="#2040d0">Z</text>
      <text x="1245" y="478" fill="#20a040">Y</text>
      <text x="1220" y="513" fill="#e04030">X</text>
    </g>
  </svg>
);

const Brand = styled.div`
  position: absolute;
  top: 4px;
  right: 12px;
  display: flex;
  flex-direction: column;
  align-items: flex-end;
  color: #fff;
  font-family: Lato, sans-serif;
  strong {
    font-size: 26px;
    line-height: 32px;
    font-weight: 900;
  }
  span {
    margin-top: -4px;
    font-size: 14px;
    line-height: 17px;
  }
  small {
    margin-top: 3px;
    padding-top: 2px;
    border-top: 1px solid #a8baf0;
    font-size: 13px;
    line-height: 16px;
    letter-spacing: 2px;
    margin-right: -1px;
  }
`;

/* ---------- lower panes ---------- */

const Lower = styled.div`
  display: flex;
  flex-shrink: 0;
  gap: 3px;
  height: 145px;
  padding-top: 4px;
  background: #eeeef2;
`;

const Pane = styled.section<{ $grow: number }>`
  display: flex;
  flex: ${(p) => p.$grow};
  flex-direction: column;
  min-width: 0;
  border-top: 1px solid #d0d0d6;
`;

const AnimationBar = styled.div`
  display: flex;
  align-items: center;
  height: 22px;
  padding-left: 9px;
  flex-shrink: 0;
  font-size: 10px;
`;

const AnimationLabel = styled.span`
  width: 52px;
`;

const GraphArea = styled.div`
  display: flex;
  flex: 1;
  min-height: 0;
  background: #fff;
  svg {
    width: 100%;
    height: 100%;
  }
`;

const BottomTabs = styled.nav`
  display: flex;
  height: 17px;
  flex-shrink: 0;
  padding: 0 0 1px 1px;
  font-size: 10px;
`;

const BottomTab = styled(PlainButton)<{ $w: number; $on?: boolean }>`
  width: ${(p) => p.$w}px;
  color: ${(p) => (p.$on ? "#1e7fd0" : "#555")};
  background: ${(p) => (p.$on ? "#fbfbfd" : "none")};
`;

const Graph = () => (
  <Pane $grow={425}>
    <PanelHead $h={16}>
      <h2>Graph</h2>
      <Dots />
      <HeadButtons max />
    </PanelHead>
    <AnimationBar>
      <Grip />
      <AnimationLabel>Animation</AnimationLabel>
      <Tools names={["toStart", "play"]} />
      <Tool type="button" $on aria-label="Stop">
        <Icon name="stop" size={12} />
      </Tool>
      <Tools names={["toEnd"]} />
      <Rule />
      <Tool type="button" $on aria-label="Distributed">
        <Icon name="frames" size={12} />
      </Tool>
      <Tools names={["frames2"]} />
      <Rule />
      <SelectBox $w={83} $h={19}>
        <select aria-label="Frames">
          <option>20 Frames</option>
        </select>
        <Down />
      </SelectBox>
      <SelectBox $w={83} $h={19}>
        <select aria-label="Duration">
          <option>2 Sec (Auto)</option>
        </select>
        <Down />
      </SelectBox>
      <Rule />
      <Tools names={["exportVideo"]} />
      <Rule />
      <Tools names={["zplay"]} />
      <Spacer />
      <svg width="9" height="16" viewBox="0 0 9 16" aria-hidden="true">
        <path d="M2 1l2.500 2L7 1M2 4l2.500 2L7 4" stroke="#777" fill="none" />
        <path d="M1.500 11h6l-3 3.500z" fill="#111" />
      </svg>
      <Row $pr={3} />
    </AnimationBar>
    <GraphArea>
      <svg viewBox="322 569 424 85" role="img" aria-label="Deformation against time">
        <path d="M364.500 589.500h362v8h-362z" fill="#fff" stroke="#999" />
        <path
          d="M364.500 597v6M400.500 597v6M436.500 597v6M472.500 597v6M508.500 597v6M545.500 597v6M581.500 597v6M617.500 597v6M653.500 597v6M689.500 597v6M726.500 597v6"
          stroke="#999"
        />
        <path d="M358 589h6v8h-6z" fill="#999" />
        <path d="M363 588h3v3h-3z" fill="#108020" />
        <path d="M363 593h3v3h-3z" fill="#1010c0" />
        <path d="M363 596h3v2h-3z" fill="#c01010" />
        <path d="M364.500 632.500h361v11h-361z" fill="#fff" stroke="#999" />
        <g fontSize="11" fontWeight="700" fill="#222" textAnchor="middle">
          <text transform="translate(351 591) rotate(-90)">[mm]</text>
          <text x="546" y="624">[s]</text>
        </g>
      </svg>
    </GraphArea>
    <BottomTabs>
      <BottomTab type="button" $w={104}>Selection Information</BottomTab>
      <BottomTab type="button" $w={106}>Graphics Annotations</BottomTab>
      <BottomTab type="button" $w={35} $on>Graph</BottomTab>
    </BottomTabs>
  </Pane>
);

const DataTable = styled.table`
  width: 303px;
  border-collapse: collapse;
  table-layout: fixed;
  color: #333;
  th, td {
    height: 13px;
    padding: 0 2px;
    border: 1px solid #b8b8b8;
    background: #fff;
    line-height: 12px;
    text-align: left;
    font-weight: 400;
    white-space: nowrap;
  }
  td + td {
    background: #e8e7e3;
  }
  th {
    padding: 0 1px;
  }
  label {
    display: flex;
    align-items: center;
    gap: 3px;
  }
`;

const DataArea = styled.div`
  flex: 1;
  background: #a0a0a0;
`;

const Tint = styled.span<{ $c: string }>`
  color: ${(p) => p.$c};
`;

const Tabular = () => (
  <Pane $grow={530}>
    <PanelHead $h={16}>
      <h2>Tabular Data</h2>
      <Dots />
      <HeadButtons max />
    </PanelHead>
    <DataArea>
      <DataTable>
        <colgroup>
          <col width="12" />
          <col width="40" />
          <col width="86" />
          <col width="87" />
          <col width="78" />
        </colgroup>
        <thead>
          <tr>
            <th />
            <th scope="col">Time [s]</th>
            {[
              ["Minimum [mm]", "#c02030"],
              ["Maximum [mm]", "#208030"],
              ["Average [mm]", "#1010e0"],
            ].map(([t, c]) => (
              <th scope="col" key={t}>
                <label>
                  <Tick defaultChecked $dark />
                  <Tint $c={c}>{t}</Tint>
                </label>
              </th>
            ))}
          </tr>
        </thead>
        <tbody>
          <tr>
            <td>1</td>
            <td>1,</td>
            <td>0,</td>
            <td>1,9358</td>
            <td>0,43282</td>
          </tr>
        </tbody>
      </DataTable>
    </DataArea>
  </Pane>
);

/* ---------- status bar and taskbar ---------- */

const StatusBar = styled.footer`
  display: flex;
  align-items: center;
  justify-content: flex-end;
  height: 15px;
  flex-shrink: 0;
  padding: 0 7px 0 320px;
  background: #0078cc;
  color: #fff;
  gap: 8px;
  font-size: 10px;
  white-space: nowrap;
`;

const Taskbar = styled.footer`
  display: flex;
  align-items: center;
  height: 34px;
  flex-shrink: 0;
  background: #dadadc;
  color: #222;
`;

const StartButton = styled(PlainButton)`
  width: 41px;
  height: 34px;
`;

const SearchBox = styled.label`
  display: flex;
  align-items: center;
  gap: 8px;
  width: 285px;
  height: 33px;
  padding-left: 9px;
  background: #fff;
  input {
    flex: 1;
    min-width: 0;
    padding: 0;
    border: 0;
    outline: 0;
    font-size: 12px;
    line-height: 16px;
    background: none;
  }
  input::placeholder {
    color: #444;
    opacity: 1;
  }
`;

const TaskButtons = styled.div`
  display: flex;
  width: 497px;
`;

const TaskButton = styled(PlainButton)<{ $run?: boolean; $active?: boolean }>`
  flex: 1;
  height: 34px;
  border: 2px solid transparent;
  border-width: 2px 0;
  ${(p) => p.$run && "border-bottom-color: #0a6cc4; margin: 0 3px;"}
  ${(p) => p.$active && "background: #f0f0f2; margin: 0; border-top-color: #f0f0f2;"}
`;

const Tray = styled.div`
  display: flex;
  align-items: center;
  justify-content: space-between;
  width: 223px;
  font-size: 10px;
`;

const Battery = styled.span`
  width: 39px;
  margin-right: 4px;
  border: 1px solid #fff;
  background: #109a48;
  color: #fff;
  font-size: 12px;
  line-height: 15px;
  text-align: center;
`;

const Clock = styled.div`
  width: 68px;
  font-size: 10px;
  line-height: 15px;
  text-align: center;
`;

const taskIcons: [string, React.ReactNode, number][] = [
  [
    "Task view",
    <path key="t" d="M3 6h11v9H3zM3 2v2M14 2v2M3 17v3M14 17v3M3 3h11M3 18h11M18 2v6M18 12v8" fill="none" stroke="#444" />,
    0,
  ],
  [
    "Store",
    <g key="s">
      <path d="M1 6h20v15H1z" fill="#333" />
      <path d="M7 6V2h8v4" fill="none" stroke="#333" strokeWidth="2" />
      <path d="M7 9h3.500v3.500H7z" fill="#f05020" />
      <path d="M11.500 9H15v3.500h-3.500z" fill="#80c020" />
      <path d="M7 13.500h3.500V17H7z" fill="#20a0f0" />
      <path d="M11.500 13.500H15V17h-3.500z" fill="#f8c020" />
    </g>,
    0,
  ],
  [
    "Mail",
    <g key="m">
      <path d="M1 8l10-7 10 7v12H1z" fill="#1466b8" />
      <path d="M3 8h16l-8 8z" fill="#fff" />
      <path d="M1 8l10 8 10-8v12H1z" fill="#2c9ce4" />
    </g>,
    0,
  ],
  [
    "L",
    <g key="l">
      <path d="M1 1h20v20H1z" fill="#20a0c8" />
      <path d="M8 5v11h7" stroke="#fff" strokeWidth="3" fill="none" />
    </g>,
    0,
  ],
  [
    "Remote desktop",
    <g key="r">
      <path d="M6 4l13 3v10L6 13z" fill="#70b8e8" stroke="#3880b8" />
      <path d="M2 14l12 4-3 2L1 16z" fill="#ddd" stroke="#888" strokeWidth=".6" />
    </g>,
    0,
  ],
  [
    "Globe",
    <g key="g">
      <circle cx="11" cy="12" r="8" fill="#28a0e0" />
      <path d="M5 9q6 2 12-3-1 8-8 13-5-4-4-10z" fill="#60c8f0" />
      <path d="M3 1l9 2-4 8z" fill="#c01848" />
      <ellipse cx="11" cy="12" rx="10" ry="5" fill="none" stroke="#f0b020" strokeWidth="1.500" transform="rotate(-30 11 12)" />
    </g>,
    0,
  ],
  [
    "SW",
    <g key="sw">
      <path d="M2 4l14-3 5 3v12l-5 5-12-2-2-4z" fill="#a01010" />
      <path d="M2 4l15 1v14L4 18z" fill="#d01818" />
      <text x="3" y="13" fontSize="9" fontWeight="700" fill="#fff">SW</text>
      <text x="8" y="20" fontSize="6" fontWeight="700" fill="#fff">2020</text>
    </g>,
    0,
  ],
  [
    "Launcher",
    <g key="a">
      <path d="M1 1h20v20H1z" fill="#0c0c10" />
      <path d="M12 6l5 4-2 9-2-1 0-8-3-3z" fill="#e07828" />
      <path d="M12 2l6 4v5z" fill="#80b8f0" />
      <path d="M2 6l6-2-3 5 5 1M3 14l6-8" stroke="#ddd" fill="none" />
    </g>,
    0,
  ],
  [
    "Recorder",
    <g key="rc">
      <path d="M2 2h18v18H2z" fill="#eee" />
      <circle cx="11" cy="11" r="9" fill="#222" />
      <circle cx="11" cy="11" r="6.500" fill="#e81818" />
    </g>,
    1,
  ],
  [
    "Explorer",
    <g key="f">
      <path d="M1 3h8l2 3h10v12H1z" fill="#f4b830" />
      <path d="M1 8h20v10H1z" fill="#fcd878" />
      <path d="M5 19v-6h12v6h-3v-3H8v3z" fill="#3890d0" />
    </g>,
    0,
  ],
  [
    "Workbench",
    <g key="wb">
      <path d="M1 1h20v20H1z" fill="#b4b4b4" />
      <path d="M1 21L8 1h6l7 20z" fill="#8c8c8c" />
      <text x="11" y="15" fontSize="9" fontWeight="700" fill="#fff" textAnchor="middle">WB</text>
    </g>,
    1,
  ],
  [
    "Mechanical",
    <g key="mc">
      <path d="M1 1h20v20H1z" fill="#6c3c7c" />
      <path d="M1 21L8 1h6l7 20z" fill="#4c2060" />
      <text x="11" y="15" fontSize="10" fontWeight="700" fill="#fff" textAnchor="middle">M</text>
    </g>,
    2,
  ],
];

const trayIcons: React.ReactNode[] = [
  <path d="M6 1v4M9 1v4M4 5h7v4l-2 2v4H6v-4L4 9z" fill="#fff" stroke="#fff" />,
  <path d="M2 11l6-6 6 6" fill="none" stroke="#333" strokeWidth="1.500" />,
  <g>
    <circle cx="8" cy="8" r="7.500" fill="#222" />
    <circle cx="8" cy="8" r="5.500" fill="#e81818" />
  </g>,
  <path d="M2 12c-2-4 2-6 4-5 2-4 8-2 8 2 2 1 1 4-1 4H4z" fill="#ccc" stroke="#555" strokeWidth="1.200" />,
  <path d="M6 1h4v9H6zM8 11v4M5 15h6M4 8v2q1 2 4 2t4-2V8" fill="#222" stroke="#222" />,
  <path d="M4 5h11v7H4zM1 3l4 3M1 6h4" fill="#333" stroke="#333" />,
  <path d="M1 6h3l4-4v12l-4-4H1zM10 5q2 3 0 6M12 3q4 5 0 10" fill="none" stroke="#333" strokeWidth="1.200" />,
  <path d="M2 10Q6 3 15 2M5 12q3-6 10-6M8 14q2-5 7-4M12 14h2" fill="none" stroke="#444" strokeWidth="1.300" />,
];

const WindowsTaskbar = () => (
  <Taskbar>
    <StartButton type="button" aria-label="Start">
      <svg width="13" height="13" viewBox="0 0 13 13" aria-hidden="true">
        <path d="M0 2l5.500-1v5H0zM6.500.8L13 0v6H6.500zM0 7h5.500v5L0 11zM6.500 7H13v6l-6.500-.8z" fill="#111" />
      </svg>
    </StartButton>
    <SearchBox>
      <svg width="15" height="15" viewBox="0 0 15 15" aria-hidden="true">
        <circle cx="9" cy="5.500" r="4.500" fill="none" stroke="#222" strokeWidth="1.200" />
        <path d="M6 9l-5 5" stroke="#222" strokeWidth="1.200" />
      </svg>
      <input aria-label="Search" placeholder="Aramak için buraya yazın" />
    </SearchBox>
    <TaskButtons>
      {taskIcons.map(([name, art, state]) => (
        <TaskButton key={name} type="button" aria-label={name} $run={state > 0} $active={state === 2}>
          <svg width="20" height="20" viewBox="0 0 22 22" aria-hidden="true">
            {art}
          </svg>
        </TaskButton>
      ))}
    </TaskButtons>
    <Spacer />
    <Tray>
      <Battery>100%</Battery>
      {trayIcons.map((art, i) => (
        <svg key={i} width="13" height="13" viewBox="0 0 16 16" aria-hidden="true">
          {art}
        </svg>
      ))}
      <span>TUR</span>
    </Tray>
    <Clock>
      19:00
      <br />
      4.02.2021
    </Clock>
    <svg width="39" height="26" viewBox="0 0 39 26" aria-hidden="true">
      <path d="M6 3h13v12H13l-3 3v-3H6z" fill="#222" />
      <path d="M8 6h9M8 9h9M8 12h6" stroke="#ddd" />
      <circle cx="18" cy="18" r="6" fill="#dadadc" stroke="#666" />
      <text x="18" y="22" fontSize="9" textAnchor="middle" fill="#222">2</text>
    </svg>
  </Taskbar>
);

export default function App() {
  return (
    <Shell>
      <GlobalStyle />
      <TitleBar>
        <QuickAccess>
          <svg width="13" height="13" viewBox="0 0 22 22" aria-hidden="true">
            <path d="M0 0h22v22H0z" fill="#5c2c6c" />
            <path d="M0 22L8 0h6l8 22z" fill="#3c1450" />
            <path d="M7 15V7l4 5 4-5v8" stroke="#fff" strokeWidth="2" fill="none" />
          </svg>
          <ThinRule $h={16} />
          <Icon name="save" size={13} />
          <Icon name="beam" size={13} />
          <Down c="#444" s={6} />
        </QuickAccess>
        <ContextTab>Context</ContextTab>
        <Title>A : Static Structural - Mechanical [ANSYS Mechanical Enterprise]</Title>
        <WindowButtons>
          <PlainButton type="button" aria-label="Minimize">
            <svg width="8" height="10" viewBox="0 0 8 10"><path d="M0 7h8" stroke="#111" strokeWidth="2" /></svg>
          </PlainButton>
          <PlainButton type="button" aria-label="Restore">
            <svg width="9" height="9" viewBox="0 0 9 9"><path d="M.5 3.500h5v5h-5zM3 3V.5h5.500v5H6" fill="none" stroke="#111" strokeWidth="1.300" /></svg>
          </PlainButton>
          <PlainButton type="button" aria-label="Close window">
            <Icon name="close" size={10} />
          </PlainButton>
        </WindowButtons>
      </TitleBar>
      <TabBar>
        <RibbonTab type="button" $w={46} $kind="file">File</RibbonTab>
        <RibbonTab type="button" $w={57}>&nbsp;Home</RibbonTab>
        <RibbonTab type="button" $w={49} $kind="on">Result</RibbonTab>
        <RibbonTab type="button" $w={55}>Display</RibbonTab>
        <RibbonTab type="button" $w={64}>Selection</RibbonTab>
        <RibbonTab type="button" $w={74}>Automation</RibbonTab>
        <Spacer />
        <QuickLaunch aria-label="Quick Launch" placeholder="Quick Launch" />
        <svg width="58" height="17" viewBox="0 0 58 17" aria-hidden="true">
          <path d="M4 11l4-4 4 4" fill="none" stroke="#c0901c" strokeWidth="1.800" />
          <path d="M20 5l9-1 1 9-9 1z" fill="#f4ecd0" stroke="#555" />
          <path d="M22 9l2 2 5-7" fill="none" stroke="#c0901c" strokeWidth="1.500" />
          <circle cx="43" cy="8.500" r="6" fill="#3a88dc" />
          <path d="M41 7q0-2 2-2t2 2q0 1-2 2v1M43 11v1.500" fill="none" stroke="#fff" strokeWidth="1.300" />
          <path d="M49 7h5l-2.500 3z" fill="#333" />
        </svg>
      </TabBar>
      <RibbonBar />
      <Work>
        <Sidebar>
          <PanelHead $h={17}>
            <h2>Outline</h2>
            <Dots />
            <HeadButtons />
          </PanelHead>
          <OutlineTree />
          <DockGap />
        </Sidebar>
        <Details />
        <Right>
          <GraphicsToolbar />
          <Viewport>
            <Model />
            <Caption>
              <p>A: Static Structural</p>
              <p>Total Deformation</p>
              <p>Type: Total Deformation</p>
              <p>Unit: mm</p>
              <p>Time: 1</p>
              <p>4.02.2021 19:00</p>
            </Caption>
            <Legend>
              {legend.map(([t, c]) => (
                <LegendItem key={t} $c={c}>
                  {t.includes("M") ? <strong>{t}</strong> : t}
                </LegendItem>
              ))}
            </Legend>
            <Brand>
              <strong>ANSYS</strong>
              <span>2021 <b>R1</b></span>
              <small>ACADEMIC</small>
            </Brand>
          </Viewport>
          <Lower>
            <Graph />
            <Tabular />
          </Lower>
        </Right>
      </Work>
      <StatusBar>
        <Row $gap={2} $pr={4}>
          <Icon name="message" size={13} />
          <span>No Messages</span>
        </Row>
        <Row $pr={4}>No Selection</Row>
        <Row $gap={5}>
          <Icon name="up" size={8} />
          <span>Metric (mm, kg, N, s, mV, mA)</span>
        </Row>
        <span>Degrees</span>
        <span>rad/s</span>
        <span>Celsius</span>
      </StatusBar>
      <WindowsTaskbar />
    </Shell>
  );
}
